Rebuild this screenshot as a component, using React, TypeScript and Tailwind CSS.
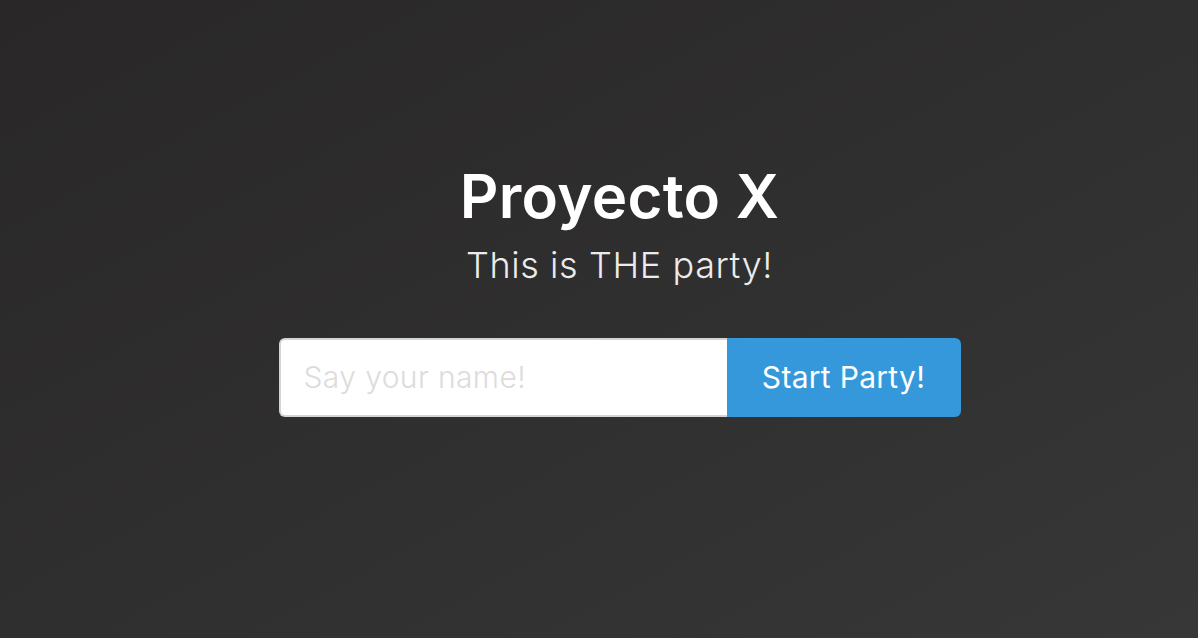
export default function App() {
  return (
    <div
      className="min-h-screen w-full bg-gradient-to-br from-[#292727] to-[#373737] flex flex-col items-center pt-[160px] pl-[41px]"
      style={{ fontFamily: "Inter, 'Noto Sans', sans-serif" }}
    >
      <h1 className="text-[60px] leading-[72px] font-semibold text-white tracking-[0.3px]">
        Proyecto X
      </h1>
      <p className="text-[36px] leading-[40px] font-light text-[#ececec] mt-[13px] tracking-[0.6px]">
        This is THE party!
      </p>
      <form className="flex mt-[53px] w-[682px] h-[79px]" onSubmit={(e) => e.preventDefault()}>
        <input
          type="text"
          placeholder="Say your name!"
          className="flex-1 min-w-0 bg-white border-2 border-r-0 border-[#d4d4d4] rounded-l-[6px] px-[23px] text-[30px] font-light tracking-[0.4px] text-gray-700 placeholder:text-[#dcdcdc] outline-none"
        />
        <button
          type="submit"
          className="w-[234px] bg-[#3498db] text-white text-[30px] font-normal tracking-[0.3px] rounded-r-[6px]"
        >
          Start Party!
        </button>
      </form>
    </div>
  );
}
